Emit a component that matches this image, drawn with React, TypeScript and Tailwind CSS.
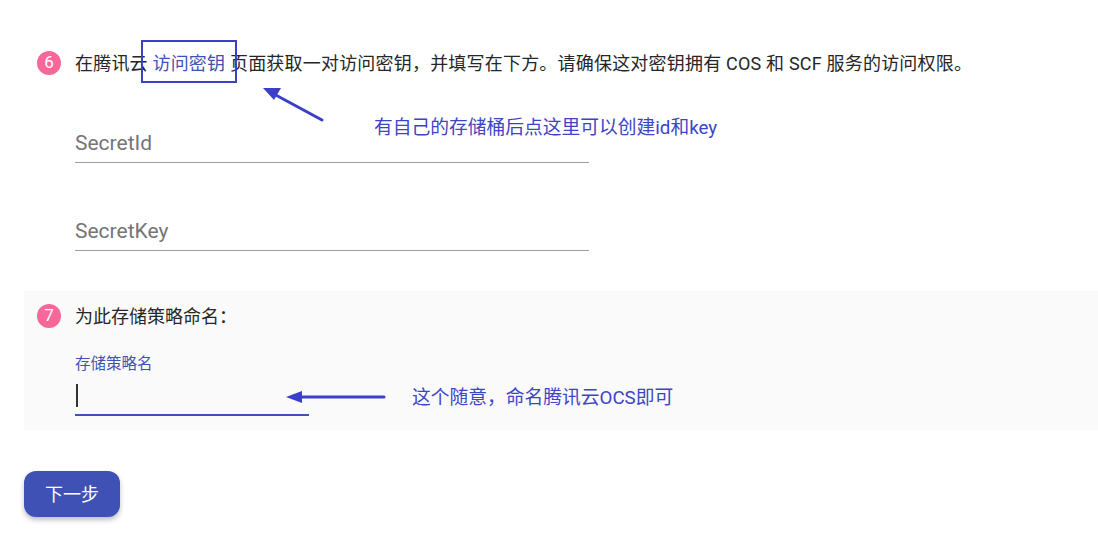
import React from 'react';

const font = { fontFamily: 'Roboto, "Noto Sans CJK SC", sans-serif' };

const StepBadge = ({ n }: { n: number }) => (
  <span className="flex h-6 w-6 shrink-0 items-center justify-center rounded-full bg-[#f7679a] text-[17px] text-white">
    {n}
  </span>
);

const TextField = ({ label }: { label: string }) => (
  <div className="w-[514px] border-b border-[#9e9e9e] pb-[7px]">
    <div className="text-[21px] leading-6 text-[#757575]">{label}</div>
  </div>
);

const App: React.FC = () => {
  return (
    <div className="relative h-[536px] w-[1098px] overflow-hidden bg-white pl-6" style={font}>
      {/* Step 6 */}
      <div className="px-[13px] pt-[51px]">
        <div className="flex h-6 items-center gap-[14px]">
          <StepBadge n={6} />
          <p className="whitespace-nowrap text-[18px] tracking-[0.2px] text-[#262626]">
            在腾讯云 <span className="text-[#3f51b5]">访问密钥</span> 页面获取一对访问密钥，并填写在下方。请确保这对密钥拥有 COS 和 SCF 服务的访问权限。
          </p>
        </div>
        <div className="ml-[38px] mt-14 flex flex-col gap-14">
          <TextField label="SecretId" />
          <TextField label="SecretKey" />
        </div>
      </div>

      {/* Step 7 */}
      <div className="mt-10 bg-[#fafafa] px-[13px] pb-[14px] pt-[13px]">
        <div className="flex h-6 items-center gap-[14px]">
          <StepBadge n={7} />
          <p className="text-[18px] text-[#262626]">为此存储策略命名：</p>
        </div>
        <div className="ml-[38px] mt-[26px] w-[234px]">
          <div className="text-[15.5px] leading-5 text-[#3f51b5]">存储策略名</div>
          <div className="mt-1 flex h-[38px] items-start border-b-2 border-[#3f51b5] pt-[6px]">
            <span className="ml-px h-[23px] w-[2px] bg-[#333]" />
          </div>
        </div>
      </div>

      <button className="mt-[41px] h-[46px] w-24 rounded-xl bg-[#3f51b5] text-[18px] text-white shadow-[0_3px_5px_rgba(0,0,0,0.25)]">
        下一步
      </button>

      {/* annotations */}
      <div className="absolute left-[141px] top-[40px] h-[43px] w-[96px] border-2 border-[#3c40c6]" />
      <div className="absolute left-[374px] top-[116px] whitespace-nowrap text-[18.75px] leading-6 text-[#3d44c6]">
        有自己的存储桶后点这里可以创建id和key
      </div>
      <div className="absolute left-[412px] top-[386px] whitespace-nowrap text-[18.75px] leading-6 text-[#3d44c6]">
        这个随意，命名腾讯云OCS即可
      </div>
      <svg className="pointer-events-none absolute left-0 top-0" width="1098" height="536">
        <line x1="322" y1="120" x2="272" y2="93" stroke="#3c40c6" strokeWidth="3" strokeLinecap="round" />
        <polygon points="263,88 281,88 274,100" fill="#3c40c6" />
        <line x1="384" y1="397" x2="298" y2="397" stroke="#3c40c6" strokeWidth="3" strokeLinecap="round" />
        <polygon points="286,397 302,391 302,403" fill="#3c40c6" />
      </svg>
    </div>
  );
};

export default App;
